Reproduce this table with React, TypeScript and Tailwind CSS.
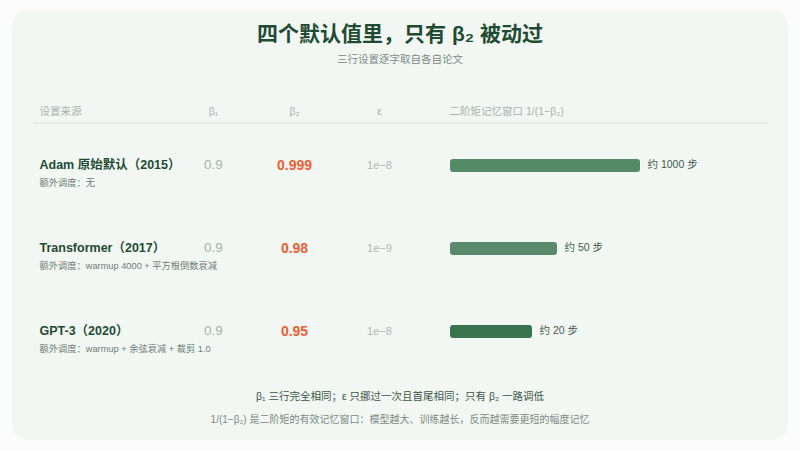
import React from 'react';

type Row = {
  name: string;
  extra: string;
  b1: string;
  b2: string;
  eps: string;
  barWidth: number;
  barClass: string;
  label: string;
};

const rows: Row[] = [
  { name: 'Adam 原始默认（2015）', extra: '额外调度：无', b1: '0.9', b2: '0.999', eps: '1e−8', barWidth: 190, barClass: 'bg-[#558a69]', label: '约 1000 步' },
  { name: 'Transformer（2017）', extra: '额外调度：warmup 4000 + 平方根倒数衰减', b1: '0.9', b2: '0.98', eps: '1e−9', barWidth: 107, barClass: 'bg-[#588a6b]', label: '约 50 步' },
  { name: 'GPT-3（2020）', extra: '额外调度：warmup + 余弦衰减 + 裁剪 1.0', b1: '0.9', b2: '0.95', eps: '1e−8', barWidth: 82, barClass: 'bg-[#3a7350]', label: '约 20 步' },
];

const font = "font-['Liberation_Sans','Noto_Sans_CJK_SC',sans-serif]";

export default function App() {
  return (
    <div className={`w-[800px] h-[450px] bg-[#fbfcfb] p-[10px_12px] ${font}`}>
      <div className="h-[430px] rounded-[16px] bg-[#f2f7f4] flex flex-col items-center pt-[10px]">
        <h1 className="text-[21px] leading-[28px] font-bold text-[#1f4b33]">四个默认值里，只有 β₂ 被动过</h1>
        <p className="mt-[3px] text-[10.5px] leading-[16px] text-[#7d8a82]">三行设置逐字取自各自论文</p>

        <div className="w-[735px] mt-[36px]">
          <div className="grid grid-cols-[134px_80px_82px_88px_1fr] px-[7px] pb-[3px] border-b-2 border-[#e4ece7] text-[10.5px] leading-[16px] text-[#a9b3ad]">
            <div>设置来源</div>
            <div className="text-center">β₁</div>
            <div className="text-center">β₂</div>
            <div className="text-center">ε</div>
            <div className="pl-[26px]">二阶矩记忆窗口 1/(1−β₂)</div>
          </div>

          <div className="flex flex-col gap-[48px] pt-[31px]">
            {rows.map((r) => (
              <div key={r.name} className="grid grid-cols-[134px_80px_82px_88px_1fr] px-[7px] items-start">
                <div className="flex flex-col">
                  <div className="text-[12.5px] leading-[20px] font-bold text-[#1f4b33] whitespace-nowrap">{r.name}</div>
                  <div className="mt-[1px] text-[9.25px] leading-[14px] text-[#6f7c74] whitespace-nowrap">{r.extra}</div>
                </div>
                <div className="text-center text-[13.5px] leading-[20px] text-[#a8b2ab]">{r.b1}</div>
                <div className="text-center text-[14px] leading-[20px] font-bold text-[#ec5f36]">{r.b2}</div>
                <div className="text-center text-[11px] leading-[20px] text-[#b0b9b3]">{r.eps}</div>
                <div className="pl-[26px] h-[20px] flex items-center gap-[8px]">
                  <div className={`h-[13px] rounded-[3px] ${r.barClass}`} style={{ width: r.barWidth }} />
                  <span className="text-[10.5px] text-[#445a4d] whitespace-nowrap">{r.label}</span>
                </div>
              </div>
            ))}
          </div>
        </div>

        <div className="mt-auto mb-[12px] flex flex-col items-center">
          <p className="text-[10.5px] leading-[16px] text-[#3b5646]">β₁ 三行完全相同；ε 只挪过一次且首尾相同；只有 β₂ 一路调低</p>
          <p className="mt-[8px] text-[10px] leading-[16px] text-[#7d8a82]">1/(1−β₂) 是二阶矩的有效记忆窗口：模型越大、训练越长，反而越需要更短的幅度记忆</p>
        </div>
      </div>
    </div>
  );
}
